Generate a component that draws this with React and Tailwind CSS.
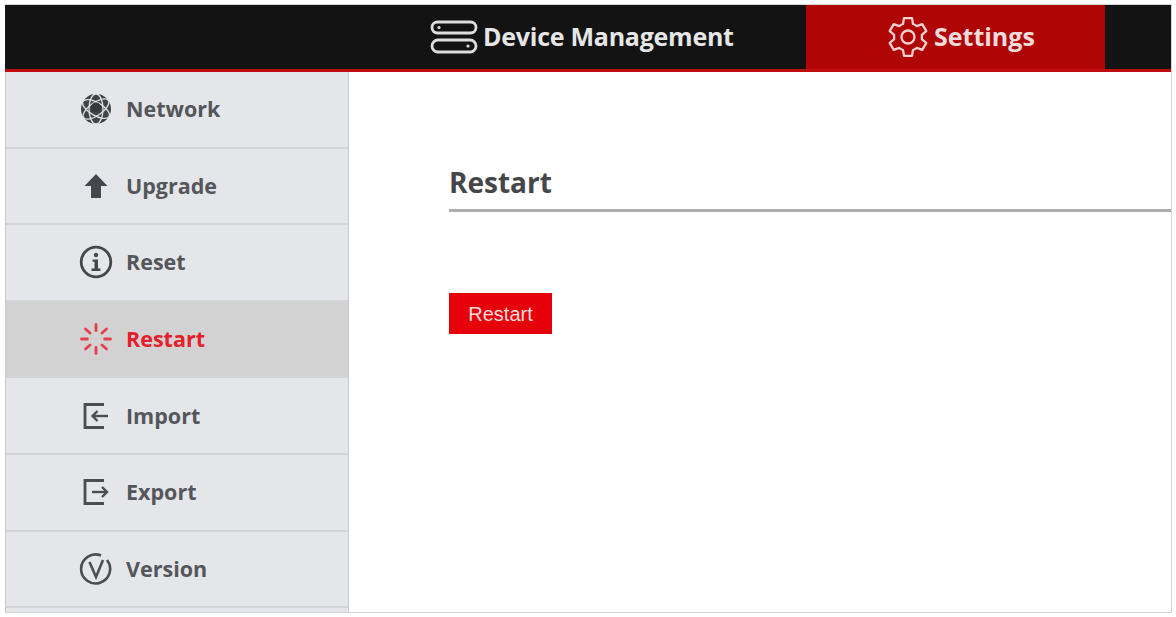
import React from 'react';

const NetworkIcon = () => (
  <svg width="32" height="32" viewBox="0 0 32 32" fill="none">
    <circle cx="16" cy="16" r="15" fill="#414347" />
    <g stroke="#dfe0e4" strokeWidth="1.3" fill="none">
      <ellipse cx="16" cy="16" rx="15" ry="6.5" transform="rotate(30 16 16)" />
      <ellipse cx="16" cy="16" rx="15" ry="6.5" transform="rotate(-35 16 16)" />
      <ellipse cx="16" cy="16" rx="7" ry="15" />
    </g>
    <circle cx="16" cy="14.5" r="5" fill="#36383c" />
  </svg>
);

const UpIcon = () => (
  <svg width="24" height="26" viewBox="0 0 24 26">
    <path d="M12 1 L23.5 13 H17 V25 H7 V13 H0.5 Z" fill="#45474c" />
  </svg>
);

const InfoIcon = () => (
  <svg width="34" height="34" viewBox="0 0 34 34" fill="none">
    <circle cx="17" cy="17" r="14.8" stroke="#45474c" strokeWidth="2.8" />
    <circle cx="17" cy="10" r="2.2" fill="#45474c" />
    <path d="M13.5 14.5 H19 V23.5 H21.5 V26 H12.5 V23.5 H15.5 V16.8 H13.5 Z" fill="#45474c" />
  </svg>
);

const SpinnerIcon = () => (
  <svg width="34" height="34" viewBox="0 0 34 34" stroke="#e6404a" strokeWidth="2.8" strokeLinecap="round">
    <path d="M17 2.5 V8.5" />
    <path d="M17 25.5 V31.5" />
    <path d="M2.5 17 H8.5" />
    <path d="M25.5 17 H31.5" />
    <path d="M6.5 7 L11 11" />
    <path d="M23 11 L27.5 7" />
    <path d="M6.5 27 L11 23" />
    <path d="M23 23 L27.5 27" />
  </svg>
);

const ImportIcon = () => (
  <svg width="28" height="28" viewBox="0 0 28 28" fill="none" stroke="#4b4d52" strokeWidth="2.8">
    <path d="M22 2.5 H3 V25.5 H22" />
    <path d="M26 14 H11" strokeWidth="2.4" />
    <path d="M15.5 9 L10.5 14 L15.5 19" strokeWidth="2.4" />
  </svg>
);

const ExportIcon = () => (
  <svg width="28" height="28" viewBox="0 0 28 28" fill="none" stroke="#4b4d52" strokeWidth="2.8">
    <path d="M22 2.5 H3 V25.5 H22" />
    <path d="M10 14 H24" strokeWidth="2.4" />
    <path d="M20 9 L25 14 L20 19" strokeWidth="2.4" />
  </svg>
);

const VersionIcon = () => (
  <svg width="34" height="34" viewBox="0 0 34 34" fill="none" stroke="#4b4d52" strokeWidth="2.6">
    <path d="M22 3.5 A14.5 14.5 0 1 0 28 8" />
    <path d="M10.5 10 L17 25 L24 8" />
  </svg>
);

const DeviceIcon = () => (
  <svg width="48" height="34" viewBox="0 0 48 34" fill="none" stroke="#dedede" strokeWidth="2.8">
    <rect x="2" y="2" width="44" height="11" rx="5.5" />
    <rect x="2" y="20" width="44" height="12" rx="6" />
    <circle cx="9" cy="7.5" r="1.6" fill="#dedede" stroke="none" />
    <circle cx="38" cy="26" r="1.6" fill="#dedede" stroke="none" />
  </svg>
);

const GearIcon = () => (
  <svg width="46" height="46" viewBox="0 0 24 24" fill="none" stroke="#f3d0d0" strokeWidth="1.2" strokeLinejoin="round">
    <path d="M9.9 2.2 h4.2 l0.5 3 a7.2 7.2 0 0 1 2 1.15 l2.85 -1.05 l2.1 3.6 l-2.35 1.95 a7.2 7.2 0 0 1 0 2.3 l2.35 1.95 l-2.1 3.6 l-2.85 -1.05 a7.2 7.2 0 0 1 -2 1.15 l-0.5 3 h-4.2 l-0.5 -3 a7.2 7.2 0 0 1 -2 -1.15 l-2.85 1.05 l-2.1 -3.6 l2.35 -1.95 a7.2 7.2 0 0 1 0 -2.3 l-2.35 -1.95 l2.1 -3.6 l2.85 1.05 a7.2 7.2 0 0 1 2 -1.15 Z" />
    <circle cx="12" cy="12" r="3.4" />
  </svg>
);

const menu = [
  { label: 'Network', icon: <NetworkIcon /> },
  { label: 'Upgrade', icon: <UpIcon /> },
  { label: 'Reset', icon: <InfoIcon /> },
  { label: 'Restart', icon: <SpinnerIcon />, active: true },
  { label: 'Import', icon: <ImportIcon /> },
  { label: 'Export', icon: <ExportIcon /> },
  { label: 'Version', icon: <VersionIcon /> },
];

const App = () => {
  return (
    <div className="w-[1176px] h-[617px] bg-white pl-[5px] pt-[4px] pr-[4px] pb-[4px] font-['Open_Sans',sans-serif] overflow-hidden">
      <div className="h-full border-y border-r border-[#d6d6d6] flex flex-col">
        <div className="h-[67px] shrink-0 bg-[#131313] border-b-[3px] border-[#bf0d0d] flex">
          <div className="w-[425px] shrink-0" />
          <div className="w-[376px] shrink-0 flex items-center gap-[5px]">
            <DeviceIcon />
            <span className="text-[25px] font-bold text-[#e6e6e6] tracking-[-0.25px]">Device Management</span>
          </div>
          <div className="w-[299px] shrink-0 bg-[#b00505] flex items-center gap-[3px] pl-[79px]">
            <GearIcon />
            <span className="text-[25px] font-bold text-[#f0dcdc]">Settings</span>
          </div>
        </div>
        <div className="flex-1 flex min-h-0">
          <div className="w-[344px] shrink-0 bg-[#e5e6ea] border-x border-[#c9c9cc] flex flex-col">
            {menu.map((item) => (
              <div
                key={item.label}
                className={`h-[76.6px] shrink-0 flex items-center border-b-2 border-[#d3d4d8] ${item.active ? 'bg-[#d2d2d2]' : ''}`}
              >
                <div className="w-[120px] shrink-0 flex items-center pl-[73px]">
                  <div className="w-[34px] flex justify-center">{item.icon}</div>
                </div>
                <span className={`text-[21.5px] font-bold ${item.active ? 'text-[#e3202b]' : 'text-[#54565b]'}`}>
                  {item.label}
                </span>
              </div>
            ))}
          </div>
          <div className="flex-1 pl-[100px] pt-[90px]">
            <div className="border-b-[3px] border-[#adadad] h-[50px]">
              <h1 className="text-[28px] font-bold text-[#45464a] leading-[40px]">Restart</h1>
            </div>
            <button className="mt-[81px] w-[103px] h-[41px] bg-[#e60009] text-[#fbdcdc] text-[20px] font-['Liberation_Sans',sans-serif]">
              Restart
            </button>
          </div>
        </div>
      </div>
    </div>
  );
};

export default App;
